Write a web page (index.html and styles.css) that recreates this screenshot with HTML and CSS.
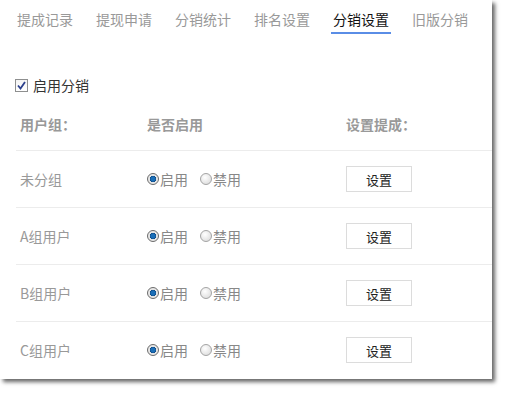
FILE: index.html
```html
<!DOCTYPE html>
<html lang="zh-CN">
<head>
    <meta charset="UTF-8">
    <title>分销设置</title>
    <link rel="stylesheet" href="styles.css">
</head>
<body>
    <div class="panel">
        <div class="tabs">
            <span class="tab">提成记录</span>
            <span class="tab">提现申请</span>
            <span class="tab">分销统计</span>
            <span class="tab">排名设置</span>
            <span class="tab active">分销设置</span>
            <span class="tab">旧版分销</span>
        </div>

        <label class="enable">
            <span class="checkbox">
                <svg width="9" height="9" viewBox="0 0 9 9"><path d="M1 4.5 L3.5 7.5 L8 1" fill="none" stroke="#2b3f8c" stroke-width="1.8"/></svg>
            </span>
            启用分销
        </label>

        <div class="table">
            <div class="row head">
                <div class="col-name">用户组：</div>
                <div class="col-state">是否启用</div>
                <div class="col-set">设置提成：</div>
            </div>
            <div class="row">
                <div class="col-name">未分组</div>
                <div class="col-state">
                    <span class="radio checked"></span><span class="radio-label">启用</span>
                    <span class="radio"></span><span class="radio-label">禁用</span>
                </div>
                <div class="col-set"><button class="btn">设置</button></div>
            </div>
            <div class="row">
                <div class="col-name">A组用户</div>
                <div class="col-state">
                    <span class="radio checked"></span><span class="radio-label">启用</span>
                    <span class="radio"></span><span class="radio-label">禁用</span>
                </div>
                <div class="col-set"><button class="btn">设置</button></div>
            </div>
            <div class="row">
                <div class="col-name">B组用户</div>
                <div class="col-state">
                    <span class="radio checked"></span><span class="radio-label">启用</span>
                    <span class="radio"></span><span class="radio-label">禁用</span>
                </div>
                <div class="col-set"><button class="btn">设置</button></div>
            </div>
            <div class="row">
                <div class="col-name">C组用户</div>
                <div class="col-state">
                    <span class="radio checked"></span><span class="radio-label">启用</span>
                    <span class="radio"></span><span class="radio-label">禁用</span>
                </div>
                <div class="col-set"><button class="btn">设置</button></div>
            </div>
        </div>
    </div>
</body>
</html>
```

FILE: styles.css
```css
body {
    margin: 0;
    min-height: 394px;
    background-color: #fff;
    font-family: "Noto Sans CJK SC", "Noto Sans", sans-serif;
    font-size: 14px;
    color: #333;
}

.panel {
    width: 492px;
    height: 379px;
    background-color: #fff;
    box-shadow: 3px 3px 4px rgba(0, 0, 0, 0.6);
    overflow: hidden;
}

.tabs {
    display: flex;
    gap: 19px;
    padding: 9px 0 0 15px;
}

.tab {
    padding: 0 2px 3px;
    line-height: 20px;
    color: #999;
    border-bottom: 2px solid transparent;
}

.tab.active {
    color: #111;
    border-bottom-color: #5a8de6;
}

.enable {
    display: flex;
    align-items: center;
    gap: 5px;
    margin: 41px 0 0 15px;
    line-height: 20px;
    color: #333;
}

.checkbox {
    width: 11px;
    height: 11px;
    border: 1px solid #8e8f8f;
    background: linear-gradient(#f4f4f4, #fff);
    display: flex;
    align-items: center;
    justify-content: center;
}

.table {
    margin: 19px 0 0 16px;
}

.row {
    display: grid;
    grid-template-columns: 131px 199px 1fr;
    align-items: center;
    height: 56px;
    border-top: 1px solid #ececec;
    color: #999;
}

.row.head {
    height: 36px;
    border-top: none;
    border-bottom: 1px solid #ececec;
    font-weight: bold;
    align-items: start;
}

.row.head + .row {
    border-top: none;
}

.col-name {
    padding-left: 4px;
}

.col-state {
    display: flex;
    align-items: center;
}

.radio {
    width: 10px;
    height: 10px;
    border: 1px solid #a4a4a4;
    border-radius: 50%;
    background: radial-gradient(circle at 40% 35%, #fff, #d6d6d6);
}

.radio.checked {
    background: radial-gradient(circle, #1b6fb8 0 2px, #0d4a86 3px, #e4e4e4 3.5px, #f2f2f2);
    border-color: #6b6b6b;
}

.radio-label {
    margin: 0 12px 0 1px;
    color: #888;
}

.btn {
    width: 66px;
    height: 26px;
    border: 1px solid #dcdcdc;
    background-color: #fff;
    font-family: inherit;
    font-size: 13px;
    color: #222;
    padding: 0;
}
```
